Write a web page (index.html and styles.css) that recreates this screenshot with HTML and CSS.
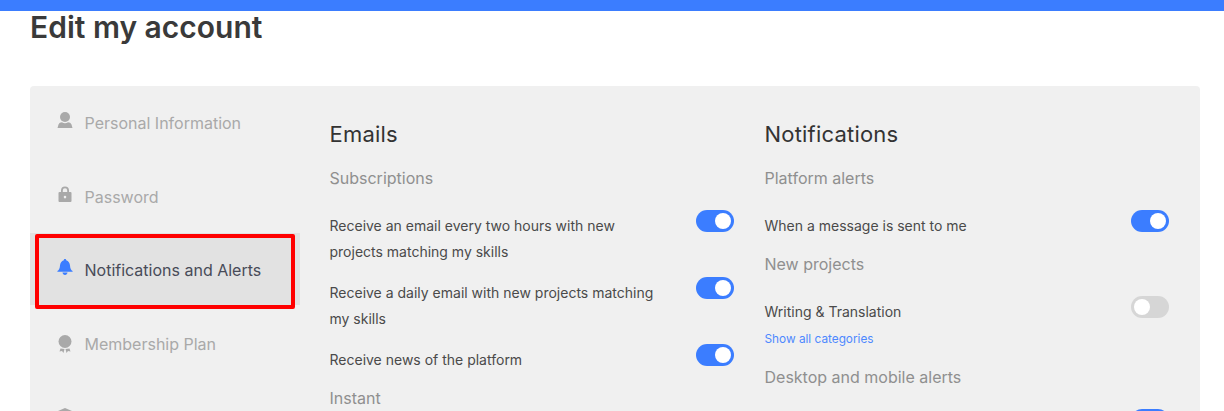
FILE: index.html
```html
<!DOCTYPE html>
<html lang="en">
<head>
<meta charset="utf-8">
<title>Edit my account</title>
<link rel="stylesheet" href="styles.css">
</head>
<body>
<div class="topbar"></div>
<main class="page">
  <h1 class="title">Edit my account</h1>
  <section class="panel">
    <nav class="side">
      <a class="item">
        <svg class="ico" viewBox="0 0 16 16"><circle cx="8" cy="5" r="5"/><path d="M0.500 16 1.500 12.500C2.200 11 3.500 10.300 5 10.200 6.600 11.500 9.400 11.500 11 10.200 12.500 10.300 13.800 11 14.500 12.500L15.500 16z"/></svg>
        <span>Personal Information</span>
      </a>
      <a class="item">
        <svg class="ico" viewBox="0 0 16 16"><path fill-rule="evenodd" d="M4 6V4.500a4 4 0 0 1 8 0V6h1.500a1 1 0 0 1 1 1v8a1 1 0 0 1-1 1h-11a1 1 0 0 1-1-1V7a1 1 0 0 1 1-1zM5.800 6h4.400V4.500a2.200 2.200 0 0 0-4.400 0zM8 9.800a1.300 1.300 0 1 0 0 2.600 1.300 1.300 0 0 0 0-2.600z"/></svg>
        <span>Password</span>
      </a>
      <a class="item active">
        <svg class="ico" viewBox="0 0 16 16"><path d="M8 0c.7 0 1.200.5 1.200 1.200C11.500 1.900 12.800 3.900 13 6.500c.2 2.800 1 4.600 2.600 5.500v.8H.4V12C2 11.100 2.800 9.300 3 6.500 3.200 3.900 4.500 1.900 6.800 1.200 6.800.5 7.300 0 8 0z"/><path d="M5.500 13.500h5C10.300 15 9.300 16 8 16s-2.300-1-2.500-2.500z"/></svg>
        <span>Notifications and Alerts</span>
      </a>
      <a class="item">
        <svg class="ico ico-tall" viewBox="0 0 16 20"><circle cx="8" cy="8.500" r="6.500"/><path d="M3.500 15.500 2.500 18.500l2.500-.5 1.500 2 1-4zM12.500 15.500l1 3-2.500-.5-1.500 2-1-4z"/></svg>
        <span>Membership Plan</span>
      </a>
      <a class="item">
        <svg class="ico" viewBox="0 0 16 16"><path d="M8 2l7 3v10H1V5z"/></svg>
      </a>
    </nav>
    <div class="col col-emails">
      <h2 class="col-title">Emails</h2>
      <h3 class="group first">Subscriptions</h3>
      <div class="row">
        <p class="label">Receive an email every two hours with new projects matching my skills</p>
        <span class="toggle on"></span>
      </div>
      <div class="row">
        <p class="label">Receive a daily email with new projects matching my skills</p>
        <span class="toggle on"></span>
      </div>
      <div class="row">
        <p class="label">Receive news of the platform</p>
        <span class="toggle on"></span>
      </div>
      <h3 class="group">Instant</h3>
    </div>
    <div class="col">
      <h2 class="col-title">Notifications</h2>
      <h3 class="group first">Platform alerts</h3>
      <div class="row">
        <p class="label">When a message is sent to me</p>
        <span class="toggle on"></span>
      </div>
      <h3 class="group">New projects</h3>
      <div class="row tight">
        <p class="label">Writing &amp; Translation</p>
        <span class="toggle"></span>
      </div>
      <a class="more">Show all categories</a>
      <h3 class="group">Desktop and mobile alerts</h3>
      <div class="row">
        <p class="label"></p>
        <span class="toggle on"></span>
      </div>
    </div>
    <div class="mark"></div>
  </section>
</main>
</body>
</html>
```
FILE: styles.css
```css
* { box-sizing: border-box; }
html, body { margin: 0; height: 411px; overflow: hidden; background: #fff; }
body { font-family: Inter, "Liberation Sans", sans-serif; color: #3d3d3d; }
.topbar { height: 11px; background: #3b7dff; }
.page { padding: 0 24px 0 30px; }
.title { margin: 0; font-size: 30px; line-height: 32px; font-weight: 600; color: #3a3a3a; }
.panel { position: relative; margin-top: 43px; height: 325px; overflow: hidden; background: #f0f0f0; border-radius: 4px 4px 0 0; display: flex; align-items: flex-start; }
.side { width: 270px; flex: none; }
.item { display: flex; align-items: flex-start; gap: 11.500px; height: 73.500px; padding: 26px 0 0 27px; font-size: 16px; line-height: 20px; color: #a9a9a9; fill: #a9a9a9; }
.item span { display: block; margin-top: 1px; }
.item.active { background: #e2e2e2; color: #484b58; fill: #3b7dff; height: 72px; margin-bottom: 1.500px; }
.ico { width: 16px; height: 16px; flex: none; }
.ico-tall { height: 20px; }
.col { width: 404.500px; flex: none; padding-top: 33px; }
.col-emails { margin-left: 29.500px; margin-right: 30.500px; }
.col-title { margin: 0; font-size: 22px; line-height: 30px; font-weight: 400; letter-spacing: 0.2px; color: #333; }
.group { margin: 0 0 20px; font-size: 16px; line-height: 24px; font-weight: 400; color: #8f8f8f; }
.group.first { margin-top: 17px; }
.row { display: flex; justify-content: space-between; align-items: flex-start; margin-bottom: 12px; }
.row + .group { margin-top: 13px; }
.row.tight { margin-bottom: 4px; }
.label { margin: 0; padding-top: 3px; width: 330px; font-size: 14px; line-height: 26px; color: #4a4a4a; }
.toggle { position: relative; flex: none; width: 38px; height: 22px; border-radius: 11px; background: #d6d6d6; }
.toggle::after { content: ""; position: absolute; top: 3px; left: 3px; width: 16px; height: 16px; border-radius: 50%; background: #fff; }
.toggle.on { background: #3b7dff; }
.toggle.on::after { left: 19px; }
.more { display: block; margin-bottom: 16px; font-size: 11.800px; line-height: 20px; color: #4d88ff; }
.mark { position: absolute; left: 5px; top: 148px; width: 260px; height: 75px; border: 4px solid #f00; border-radius: 2px; }
```
